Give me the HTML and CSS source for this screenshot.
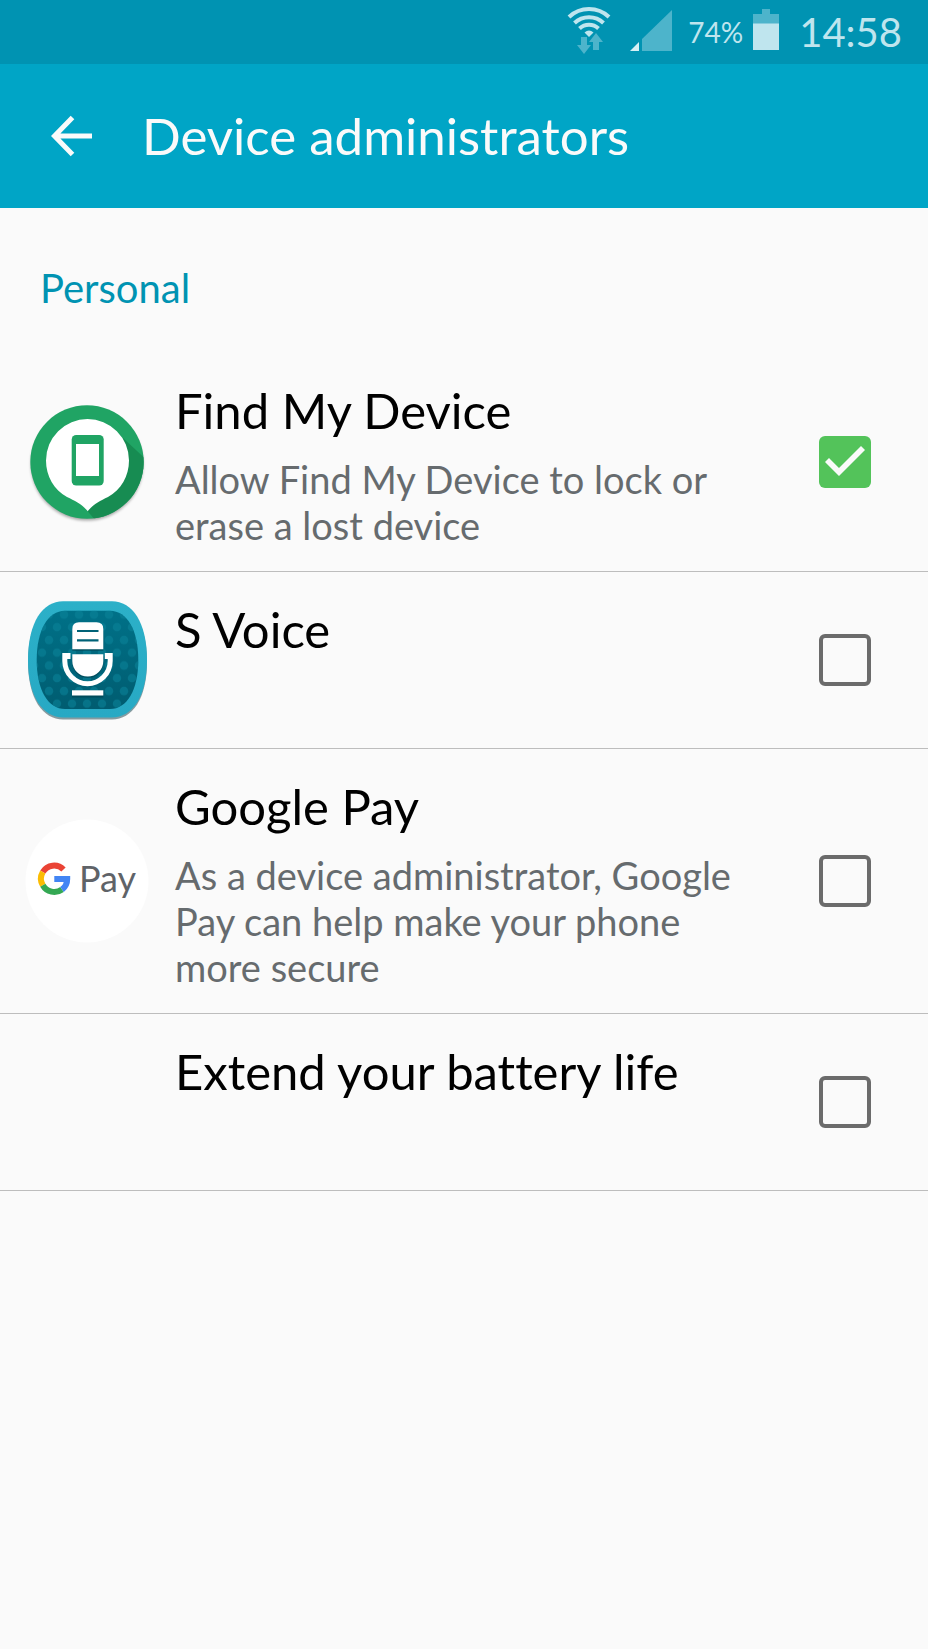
FILE: index.html
```html
<!DOCTYPE html>
<html lang="en">
<head>
<meta charset="utf-8">
<meta name="viewport" content="width=device-width, initial-scale=1">
<title>Device administrators</title>
<link rel="stylesheet" href="styles.css">
</head>
<body>
<div class="status-bar">
  <svg class="wifi" width="44" height="48" viewBox="0 0 44 48" aria-label="Wi-Fi">
    <g fill="none" stroke="#bfe5ee" stroke-width="4">
      <path d="M2 11A29 29 0 0 1 42 11"/>
      <path d="M7.500 17A21 21 0 0 1 36.500 17"/>
      <path d="M12.500 22.500A14 14 0 0 1 31.500 22.500"/>
    </g>
    <path d="M17.500 26.500Q22 22.500 26.500 26.500L22 31Z" fill="#bfe5ee"/>
    <path d="M14 31h6v8h4l-7 9L10 39h4zM26 44h6v-8h4L29 27l-7 9h4z" fill="#4db4cb"/>
  </svg>
  <svg class="signal" width="43" height="42" viewBox="0 0 43 42" aria-label="Signal">
    <path d="M13 29L43 0V41H13Z" fill="#4db4cb"/>
    <path d="M1 41L10 32V41Z" fill="#d6f0f5"/>
  </svg>
  <span class="percent">74%</span>
  <svg class="battery" width="26" height="42" viewBox="0 0 26 42" aria-label="Battery">
    <path d="M9 0H17V5H26V15H0V5H9Z" fill="#4db4cb"/>
    <path d="M0 14.500H26V41H0Z" fill="#bfe5ee"/>
  </svg>
  <time class="clock">14:58</time>
</div>
<header class="app-bar">
  <button class="back" type="button" aria-label="Back">
    <svg width="44" height="44" viewBox="0 0 44 44"><path d="M22.500 3.500L4.500 22L22.500 40.500M5 22H42" fill="none" stroke="#fafafa" stroke-width="5"/></svg>
  </button>
  <h1 class="page-title">Device administrators</h1>
</header>
<main>
  <h2 class="section">Personal</h2>
  <ul class="list">
    <li><label class="row">
      <svg class="icon" viewBox="0 0 124 124" aria-hidden="true">
        <defs><filter id="soft" x="-10%" y="-10%" width="120%" height="125%"><feGaussianBlur stdDeviation="1.500"/></filter>
        <clipPath id="disc"><circle cx="62" cy="62" r="56.700"/></clipPath></defs>
        <circle cx="62" cy="64.500" r="56" fill="#000" opacity=".35" filter="url(#soft)"/>
        <circle cx="62" cy="62" r="56.700" fill="#20a464"/>
        <path d="M98 38L124 62V124H73.500L62.500 111Z" fill="#178c52" clip-path="url(#disc)"/>
        <path d="M62.700 111.300C57 104 50 101 42 97C29 90 21 76 21 60.500A41.500 41.500 0 0 1 104 60.500C104 76 96 90 83 97C75 101 68.500 104 62.700 111.300Z" fill="#fff"/>
        <rect x="46.700" y="35" width="32" height="50.500" rx="4.500" fill="#20a464"/>
        <path d="M51 44H74V76H51Z" fill="#fff"/>
      </svg>
      <span class="text"><span class="name">Find My Device</span><span class="summary">Allow Find My Device to lock or erase a lost device</span></span>
      <input class="check" type="checkbox" checked>
    </label></li>
    <li><label class="row">
      <svg class="icon" viewBox="0 0 124 124" aria-hidden="true">
        <defs>
          <linearGradient id="rim" x1="0" y1="0" x2="0" y2="1"><stop offset="0" stop-color="#2cb0c8"/><stop offset="1" stop-color="#27a9c4"/></linearGradient>
          <linearGradient id="well" x1="0" y1="0" x2="0" y2="1"><stop offset="0" stop-color="#007188"/><stop offset="1" stop-color="#005c70"/></linearGradient>
          <pattern id="dots" x="17" y="9.500" width="15" height="25.500" patternUnits="userSpaceOnUse"><circle cx="7" cy="7" r="4.200" fill="#0a8298"/><circle cx="0" cy="19.700" r="4.200" fill="#0a8298"/><circle cx="15" cy="19.700" r="4.200" fill="#0a8298"/></pattern>
        </defs>
        <path d="M38 5.500H87C107 5.500 122 26 122 64C122 101 107 121.500 87 121.500H38C18 121.500 3 101 3 64C3 26 18 5.500 38 5.500Z" fill="#123b45" opacity=".5"/>
        <path d="M38 3.300H87C107 3.300 122 24 122 62C122 99 107 119.500 87 119.500H38C18 119.500 3 99 3 62C3 24 18 3.300 38 3.300Z" fill="url(#rim)"/>
        <path d="M40 12.700H85C102 12.700 113.300 32 113.300 62C113.300 92 102 111 85 111H40C23 111 11.700 92 11.700 62C11.700 32 23 12.700 40 12.700Z" fill="url(#well)"/>
        <path d="M40 12.700H85C102 12.700 113.300 32 113.300 62C113.300 92 102 111 85 111H40C23 111 11.700 92 11.700 62C11.700 32 23 12.700 40 12.700Z" fill="url(#dots)" opacity=".6"/>
        <path d="M47.300 52.800V32.500Q47.300 25.800 54 25.800H71.500Q78.300 25.800 78.300 32.500V52.800ZM47.300 57.800H78.300V64.500A15.500 15.500 0 0 1 47.300 64.500ZM47 93.800H78.300V99.500H47Z" fill="#003f4d" opacity=".6"/>
        <g fill="#fff">
          <path d="M47.300 51.300V31Q47.300 24.300 54 24.300H71.500Q78.300 24.300 78.300 31V51.300Z"/>
          <path d="M47.300 56.300H78.300V63A15.500 15.500 0 0 1 47.300 63Z"/>
          <path d="M37.300 55H45.500V61H42.300V63A20.200 20.200 0 0 0 82.700 63V61H79.800V55H87.700V63A25.200 25.200 0 0 1 37.300 63Z"/>
          <path d="M47 92.300H78.300V97.500H47Z"/>
        </g>
        <path d="M52 33H73.500M52 42.300H73.500" stroke="#006277" stroke-width="2.200"/>
      </svg>
      <span class="text"><span class="name">S Voice</span></span>
      <input class="check" type="checkbox">
    </label></li>
    <li><label class="row">
      <svg class="icon" viewBox="0 0 124 124" aria-hidden="true">
        <circle cx="62" cy="62" r="61.500" fill="#fff"/>
        <g fill="none" stroke-width="6">
          <path d="M38.500 50.500A13.200 13.200 0 0 0 17.800 53" stroke="#ea4335"/>
          <path d="M17.800 53A13.200 13.200 0 0 0 17.800 66.300" stroke="#fbbc04"/>
          <path d="M17.800 66.300A13.200 13.200 0 0 0 37 70.500" stroke="#34a853"/>
          <path d="M37 70.500A13.200 13.200 0 0 0 42.200 60H29.300" stroke="#4285f4"/>
        </g>
        <text class="pay" x="54" y="73">Pay</text>
      </svg>
      <span class="text"><span class="name">Google Pay</span><span class="summary">As a device administrator, Google Pay can help make your phone more secure</span></span>
      <input class="check" type="checkbox">
    </label></li>
    <li><label class="row">
      <span class="icon"></span>
      <span class="text"><span class="name">Extend your battery life</span></span>
      <input class="check" type="checkbox">
    </label></li>
  </ul>
</main>
</body>
</html>
```

FILE: styles.css
```css
* { box-sizing: border-box; }
body {
  margin: 0;
  min-height: 100vh;
  background: #fafafa;
  color: #000;
  font-family: Lato, "Open Sans", sans-serif;
  font-variant-ligatures: none;
}
.status-bar {
  display: flex;
  align-items: center;
  justify-content: flex-end;
  height: 64px;
  padding-right: 26px;
  background: #0093b2;
  color: #bfe5ee;
}
.wifi { margin-bottom: 4px; }
.signal { margin-left: 18px; margin-bottom: 2px; }
.percent { margin-left: 16px; font-size: 28px; line-height: 32px; }
.battery { margin-left: 10px; margin-bottom: 4px; }
.clock { margin-left: 20px; font-size: 40px; line-height: 48px; }
.app-bar {
  display: flex;
  align-items: center;
  height: 144px;
  padding: 0 50px;
  background: #00a5c6;
  color: #fafafa;
}
.back {
  display: flex;
  padding: 0;
  border: 0;
  background: none;
}
.page-title {
  margin: 0 0 0 48px;
  font-size: 51px;
  font-weight: 400;
  line-height: 60px;
}
.section {
  margin: 0;
  padding: 56px 40px 41px;
  color: #0093b2;
  font-size: 40px;
  font-weight: 400;
  line-height: 48px;
}
.list { margin: 0; padding: 0; list-style: none; }
.row {
  display: flex;
  align-items: center;
  min-height: 177px;
  padding: 0 57px 0 25px;
  border-bottom: 1px solid #bdbdbd;
}
.icon { flex: none; width: 124px; height: 124px; }
.pay { fill: #5f6368; font-size: 36px; }
.text {
  display: flex;
  flex: 1;
  flex-direction: column;
  align-self: flex-start;
  gap: 16px;
  padding: 27px 64px 23px 26px;
}
.name { font-size: 49px; line-height: 60px; }
.summary { color: #666b6e; font-size: 38px; line-height: 46px; }
.check {
  flex: none;
  width: 52px;
  height: 52px;
  margin: 0;
  appearance: none;
  border: 4px solid #6b6b6b;
  border-radius: 6px;
}
.check:checked {
  position: relative;
  border: 0;
  background: #53c35a;
}
.check:checked::after {
  content: "";
  position: absolute;
  top: 10px;
  left: 6px;
  width: 40px;
  height: 30px;
  background: #fafafa;
  clip-path: polygon(0 16px, 4px 12px, 14px 22px, 36px 0, 40px 4px, 14px 30px);
}
```
